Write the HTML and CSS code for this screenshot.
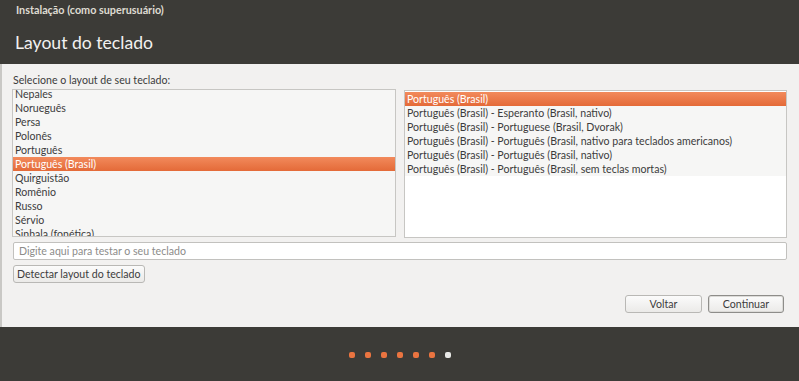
FILE: index.html
```html
<!DOCTYPE html>
<html lang="pt-BR">
<head>
  <meta charset="UTF-8">
  <title>Instalação (como superusuário)</title>
  <link rel="stylesheet" href="styles.css">
</head>
<body>
  <div class="window">
    <div class="titlebar">Instalação (como superusuário)</div>
    <div class="header">
      <h1>Layout do teclado</h1>
    </div>

    <div class="content">
      <div class="prompt">Selecione o layout de seu teclado:</div>

      <div class="lists">
        <div class="list">
          <ul class="rows scrolled">
            <li>Nepales</li>
            <li>Norueguês</li>
            <li>Persa</li>
            <li>Polonês</li>
            <li>Português</li>
            <li class="selected">Português (Brasil)</li>
            <li>Quirguistão</li>
            <li>Romênio</li>
            <li>Russo</li>
            <li>Sérvio</li>
            <li>Sinhala (fonética)</li>
          </ul>
        </div>
        <div class="list">
          <ul class="rows">
            <li class="selected">Português (Brasil)</li>
            <li>Português (Brasil) - Esperanto (Brasil, nativo)</li>
            <li>Português (Brasil) - Portuguese (Brasil, Dvorak)</li>
            <li>Português (Brasil) - Português (Brasil, nativo para teclados americanos)</li>
            <li>Português (Brasil) - Português (Brasil, nativo)</li>
            <li>Português (Brasil) - Português (Brasil, sem teclas mortas)</li>
          </ul>
        </div>
      </div>

      <input class="test-input" type="text" placeholder="Digite aqui para testar o seu teclado">

      <div class="detect-row">
        <button class="btn">Detectar layout do teclado</button>
      </div>

      <div class="nav">
        <button class="btn nav-btn">Voltar</button>
        <button class="btn nav-btn default">Continuar</button>
      </div>
    </div>

    <div class="footer">
      <span class="dot"></span>
      <span class="dot"></span>
      <span class="dot"></span>
      <span class="dot"></span>
      <span class="dot"></span>
      <span class="dot"></span>
      <span class="dot current"></span>
    </div>
  </div>
</body>
</html>
```

FILE: styles.css
```css
body {
  margin: 0;
  font-family: Lato, 'Noto Sans', sans-serif;
  font-size: 10.6px;
  color: #3c3c3c;
  background-color: #3c3b37;
}
.window {
  width: 799px;
  height: 381px;
  display: flex;
  flex-direction: column;
  overflow: hidden;
}
.titlebar {
  height: 20px;
  line-height: 20px;
  padding-left: 16px;
  background-color: #3c3b37;
  color: #dfdbd2;
  font-weight: bold;
  font-size: 10.8px;
}
.header {
  height: 44px;
  background-color: #3c3b37;
  display: flex;
  align-items: center;
  padding-left: 15px;
}
.header h1 {
  margin: 0;
  font-size: 17.6px;
  font-weight: normal;
  color: #f2f1f0;
}
.content {
  height: 263px;
  box-sizing: border-box;
  background-color: #f2f1f0;
  border-left: 2px solid #c9c8c5;
  padding: 8px 12px 0 10px;
  display: flex;
  flex-direction: column;
}
.prompt {
  height: 17px;
  line-height: 17px;
  padding-left: 1px;
}
.lists {
  display: flex;
  gap: 8px;
  height: 148px;
}
.list {
  flex: 1;
  background-color: #ffffff;
  border: 1px solid #c7c6c3;
  overflow: hidden;
}
.list:last-child {
  margin-top: 1px;
  height: 145px;
  flex: 0 0 381px;
  padding-top: 1px;
}
.rows {
  list-style: none;
  margin: 0;
  padding: 0;
}
.rows.scrolled {
  margin-top: -3px;
}
.rows li {
  height: 14px;
  line-height: 15px;
  padding-left: 2px;
  background-color: #f6f6f5;
  white-space: nowrap;
}
.rows li.selected {
  background: linear-gradient(#f28a5c, #e46a38);
  color: #ffffff;
}
.test-input {
  margin-top: 5px;
  height: 18px;
  box-sizing: border-box;
  width: 774px;
  margin-left: 1px;
  border: 1px solid #c2c1be;
  border-radius: 2px;
  background-color: #ffffff;
  font-family: inherit;
  font-size: 10.6px;
  padding: 0 5px;
  color: #3c3c3c;
}
.test-input::placeholder {
  color: #8c8c8a;
}
.detect-row {
  margin-top: 5px;
  padding-left: 1px;
}
.btn {
  height: 18px;
  box-sizing: border-box;
  padding: 0 3px;
  font-family: inherit;
  font-size: 10.6px;
  color: #3c3c3c;
  background: linear-gradient(#fbfbfb, #ebeae8);
  border: 1px solid #b9b8b5;
  border-radius: 3px;
}
.nav {
  margin-top: 12px;
  display: flex;
  justify-content: flex-end;
  gap: 6px;
  padding-right: 3px;
}
.nav-btn {
  width: 77px;
}
.nav-btn.default {
  width: 76px;
  border-color: #8e8d8a;
  box-shadow: inset 0 0 0 1px #dcdbd8;
}
.footer {
  flex: 1;
  background-color: #3c3b37;
  display: flex;
  justify-content: center;
  align-items: center;
  gap: 10px;
  padding-top: 2px;
}
.dot {
  width: 6px;
  height: 6px;
  border-radius: 2px;
  background-color: #ea7440;
}
.dot.current {
  background-color: #e8e8e6;
}
```
